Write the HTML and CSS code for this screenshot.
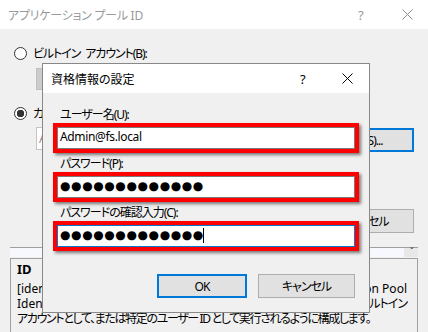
FILE: index.html
```html
<!DOCTYPE html>
<html lang="ja">
<head>
    <meta charset="UTF-8">
    <title>アプリケーション プール ID</title>
    <link rel="stylesheet" href="styles.css">
</head>
<body>
    <div class="window">
        <div class="titlebar">
            <span class="title">アプリケーション プール ID</span>
            <span class="tb-help">?</span>
            <span class="tb-close">
                <svg width="11" height="11" viewBox="0 0 11 11"><path d="M0.5 0.5L10.5 10.5M10.5 0.5L0.5 10.5" stroke="#8c8c8c" stroke-width="1"/></svg>
            </span>
        </div>
        <div class="content">
            <div class="radio-row">
                <span class="radio"></span>
                <span>ビルトイン アカウント(B):</span>
            </div>
            <div class="combo"></div>
            <div class="radio-row second">
                <span class="radio checked"></span>
                <span>カスタム アカウント(C):</span>
            </div>
            <div class="custom-row">
                <div class="textbox">Admin@fs.local</div>
                <button class="btn btn-default">設定(S)...</button>
            </div>
            <div class="actions">
                <button class="btn">OK</button>
                <button class="btn">キャンセル</button>
            </div>
        </div>
        <div class="strip">
            <span class="strip-arrow">ˇ</span>
        </div>
        <div class="desc">
            <div class="desc-title">ID</div>
            <div class="desc-line latin"><span>[identityType, username, password]</span><span>on Pool</span></div>
            <div class="desc-line latin"><span>Identity (推奨)、Network Service など</span><span class="jp">ビルトイン</span></div>
            <div class="desc-line"><span>アカウントとして、または特定のユーザー ID として実行されるように構成します。</span></div>
        </div>

        <div class="modal">
            <div class="modal-titlebar">
                <span class="modal-title">資格情報の設定</span>
                <span class="modal-help">?</span>
                <span class="modal-close">
                    <svg width="11" height="11" viewBox="0 0 11 11"><path d="M0.5 0.5L10.5 10.5M10.5 0.5L0.5 10.5" stroke="#000" stroke-width="1"/></svg>
                </span>
            </div>
            <div class="modal-body">
                <div class="field-label">ユーザー名(U):</div>
                <div class="mark">
                    <div class="input">Admin@fs.local</div>
                </div>
                <div class="field-label next">パスワード(P):</div>
                <div class="mark">
                    <div class="input"><span class="dots">●●●●●●●●●●●●●</span></div>
                </div>
                <div class="field-label next">パスワードの確認入力(C):</div>
                <div class="mark">
                    <div class="input focused"><span class="dots">●●●●●●●●●●●●●</span><span class="caret"></span></div>
                </div>
                <div class="modal-actions">
                    <button class="btn btn-default btn-ok">OK</button>
                    <button class="btn btn-cancel">キャンセル</button>
                </div>
            </div>
        </div>
    </div>
</body>
</html>
```

FILE: styles.css
```css
body {
    margin: 0;
    padding: 0;
    font-family: "Noto Sans", "Noto Sans CJK JP", sans-serif;
    font-size: 12px;
    font-feature-settings: "palt";
    color: #000;
    background-color: #f0f0f0;
}
.window {
    position: relative;
    width: 428px;
    height: 332px;
    overflow: hidden;
    background-color: #f0f0f0;
}
.titlebar {
    display: flex;
    align-items: center;
    height: 29px;
    padding-left: 8px;
    background-color: #fff;
    color: #999;
}
.title {
    flex: 1;
    letter-spacing: -0.25px;
}
.tb-help {
    width: 10px;
    margin-right: 34px;
    font-size: 13px;
}
.tb-close {
    display: flex;
    margin-right: 15px;
}
.content {
    padding-left: 14px;
}
.radio-row {
    display: flex;
    align-items: center;
    height: 16px;
    margin-top: 16px;
    letter-spacing: -1.1px;
    word-spacing: 3px;
    white-space: pre;
}
.radio-row.second {
    margin-top: 15px;
}
.radio {
    box-sizing: border-box;
    flex-shrink: 0;
    width: 13px;
    height: 13px;
    margin-right: 6px;
    border: 1px solid #333;
    border-radius: 50%;
    background-color: #fff;
}
.radio.checked {
    background: radial-gradient(circle, #333 3.5px, #fff 4px);
}
.combo {
    box-sizing: border-box;
    width: 334px;
    height: 22px;
    margin: 7px 0 0 22px;
    border: 1px solid #bfbfbf;
    background-color: #cccccc;
}
.custom-row {
    display: flex;
    align-items: flex-start;
    margin: 6px 0 0 22px;
}
.textbox {
    box-sizing: border-box;
    width: 270px;
    height: 23px;
    padding: 3px 2px;
    border: 1px solid #c4c4c4;
    background-color: #fff;
    color: #8a8a8a;
    line-height: 15px;
    letter-spacing: -0.35px;
}
.btn {
    box-sizing: border-box;
    height: 24px;
    padding: 0;
    border: 1px solid #adadad;
    background-color: #e1e1e1;
    font-family: inherit;
    font-size: 12px;
    font-feature-settings: "palt";
    letter-spacing: -1px;
    white-space: nowrap;
    color: #000;
}
.btn-default {
    border: 2px solid #0078d7;
}
.custom-row .btn {
    width: 80px;
    margin: 1px 0 0 28px;
    text-align: left;
    padding-left: 7px;
}
.actions {
    display: flex;
    justify-content: flex-end;
    gap: 10px;
    margin-top: 57px;
    padding-right: 14px;
}
.actions .btn {
    width: 100px;
}
.strip {
    position: relative;
    box-sizing: border-box;
    height: 10px;
    margin: 14px 10px 0;
    border-top: 1px solid #a0a0a0;
    background: linear-gradient(to right, #f6f8fd 394px, #e8e8e8 394px);
}
.strip-arrow {
    position: absolute;
    right: 4px;
    top: -4px;
    font-size: 11px;
    color: #555;
}
.desc {
    box-sizing: border-box;
    height: 80px;
    margin: 1px 10px 0;
    padding: 2px 6px 0;
    border: 1px solid #a0a0a0;
}
.desc-title {
    height: 16px;
    margin-bottom: 4px;
    font-size: 13px;
    font-weight: bold;
    line-height: 16px;
}
.desc-line {
    display: flex;
    justify-content: space-between;
    height: 15px;
    padding-right: 4px;
    line-height: 15px;
    font-size: 12px;
    letter-spacing: -1.35px;
    white-space: nowrap;
}
.desc-line.latin {
    letter-spacing: 0;
}
.desc-line .jp {
    letter-spacing: -1px;
}

/* 資格情報の設定 */
.modal {
    position: absolute;
    left: 42px;
    top: 63px;
    box-sizing: border-box;
    width: 328px;
    height: 250px;
    border: 1px solid #888;
    background-color: #f0f0f0;
}
.modal-titlebar {
    display: flex;
    align-items: center;
    height: 29px;
    padding-left: 8px;
    background-color: #fff;
}
.modal-title {
    flex: 1;
}
.modal-help {
    width: 8px;
    margin-right: 34px;
    font-size: 13px;
}
.modal-close {
    display: flex;
    margin-right: 16px;
}
.modal-body {
    padding: 14px 10px 0;
}
.field-label {
    height: 16px;
    padding-left: 7px;
    line-height: 16px;
    letter-spacing: -1px;
}
.field-label.next {
    margin-top: 3px;
}
.mark {
    border: 4px solid #ff0000;
    box-shadow: 2px 2px 3px rgba(0, 0, 0, 0.5);
}
.input {
    display: flex;
    align-items: center;
    box-sizing: border-box;
    height: 22px;
    padding: 0 2px 2px;
    border: 1px solid #7a7a7a;
    background-color: #fff;
    line-height: 16px;
    letter-spacing: -0.35px;
}
.input.focused {
    border-color: #0078d7;
}
.dots {
    font-family: "DejaVu Sans", sans-serif;
    font-size: 12px;
    letter-spacing: 0.6px;
}
.caret {
    width: 1px;
    height: 15px;
    margin-left: -0.6px;
    background-color: #000;
}
.modal-actions {
    display: flex;
    justify-content: flex-end;
    gap: 11px;
    margin-top: 23px;
    padding-right: 4px;
}
.btn-ok {
    width: 90px;
}
.btn-cancel {
    width: 97px;
}
```
